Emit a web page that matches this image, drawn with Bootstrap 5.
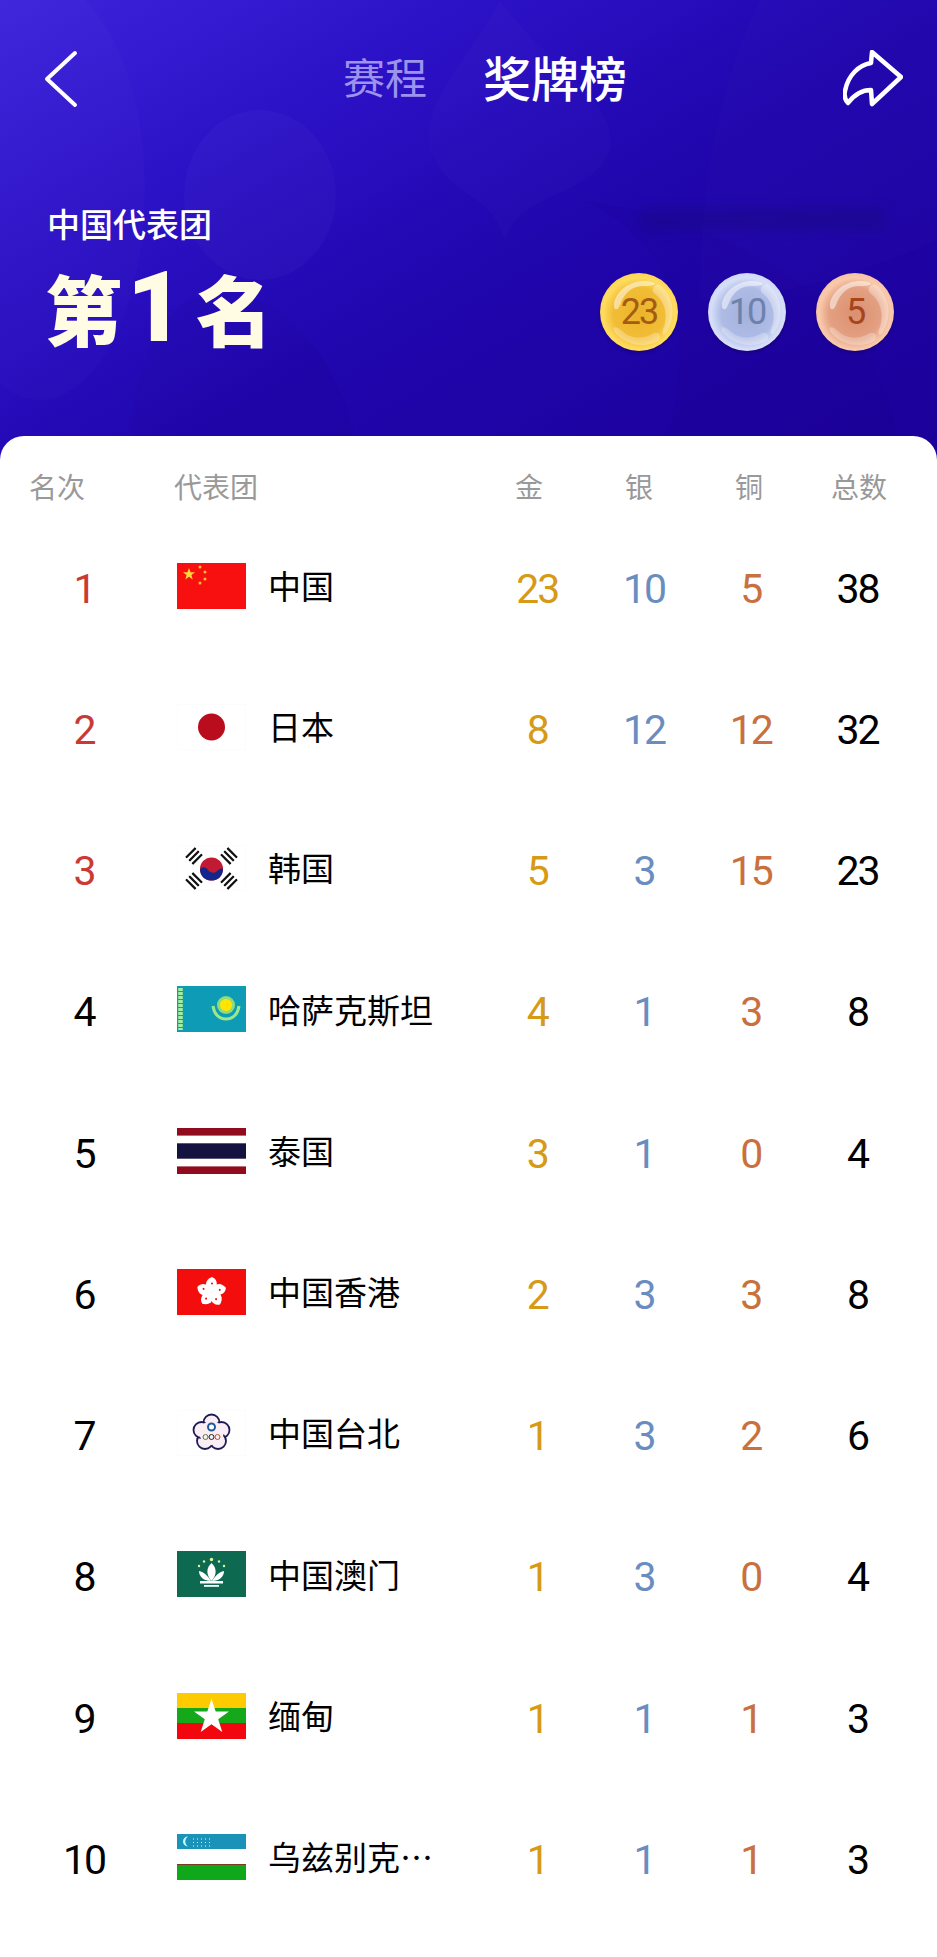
<!DOCTYPE html>
<html lang="zh-CN">
<head>
  <meta charset="UTF-8">
  <meta name="viewport" content="width=device-width, initial-scale=1">
  <title>奖牌榜</title>
  <link href="https://cdn.jsdelivr.net/npm/bootstrap@5.3.0/dist/css/bootstrap.min.css" rel="stylesheet">
  <style>
    body { font-family: "Noto Sans CJK SC", sans-serif; background: #fff; color: #000; }
    .hero { height: 460px; padding: 47px 43px 0 47px; color: #fff; overflow: hidden;
      background: linear-gradient(150deg, #3d24dc 0%, #2c12c6 28%, #2006ad 55%, #1c0099 100%); }
    .hero-bg { position: absolute; inset: 0; width: 100%; height: 100%; }
    .hero-inner { position: relative; }
    .back-icon { margin-left: -3px; margin-right: 265px; }
    .tab-off { font-size: 42px; line-height: 58px; color: #9d92ec; margin-right: 56px; padding-bottom: 6px; }
    .tab-on { font-size: 48px; line-height: 58px; font-weight: 500; padding-bottom: 6px; }
    .share-icon { margin-right: -9px; }
    .team-label { font-size: 33px; line-height: 40px; font-weight: 500; margin-top: 92px; }
    .place { font-size: 77px; line-height: 88px; height: 88px; font-weight: 900; color: #fffce3; margin: 21px 0 0 -2px; }
    .place-num { font-family: Roboto, sans-serif; font-size: 98px; margin: 0 12px 0 5px; }
    .haze { position: absolute; left: 640px; top: 208px; width: 245px; height: 22px; background: #150a78; opacity: .35; filter: blur(6px); }
    .coin-row { gap: 30px; margin-bottom: 1px; }
    .coin { width: 78px; height: 78px; font-family: Roboto, sans-serif; font-size: 36px; letter-spacing: -2px; line-height: 78px; text-align: center; position: relative; box-shadow: 0 2px 3px rgba(20,0,80,.45); }
    .coin svg { position: absolute; left: 0; top: 0; }
    .coin span { position: relative; }
    .coin-gold { background: radial-gradient(circle at 50% 52%, #ecb32c 0, #f2bd36 46%, #ffdc60 64%, #f5b72a 100%); color: #a35d12; }
    .coin-silver { background: radial-gradient(circle at 50% 52%, #a3b1dc 0, #aebbe5 46%, #d6def8 64%, #b4c1ee 100%); color: #6d82ab; }
    .coin-bronze { background: radial-gradient(circle at 50% 52%, #db9070 0, #e3a082 46%, #f9c9ac 64%, #e9a284 100%); color: #a6441a; }
    .sheet { position: relative; margin-top: -24px; background: #fff; border-radius: 24px 24px 0 0; padding-bottom: 30px; }
    .head-row { height: 79px; padding: 21px 23px 0 29px; font-size: 28px; line-height: 58px; color: #999; }
    .head-rank { width: 145px; }
    .head-num { width: 110px; text-align: center; }
    .rank-row { height: 141.25px; padding-right: 26px; }
    .rank-no { width: 168px; text-align: center; font-family: Roboto, sans-serif; font-size: 41px; letter-spacing: -2px; line-height: 46px; padding-top: 6px; }
    .rank-top { color: #c93a34; }
    .team-cell { margin-left: 9px; gap: 22px; font-size: 33px; white-space: nowrap; }
    .flag-img { width: 69px; height: 46px; display: block; flex: none; }
    .val { width: 106.75px; text-align: center; font-family: Roboto, sans-serif; font-size: 41px; letter-spacing: -2px; line-height: 46px; padding-top: 6px; }
    .v-gold { color: #d69a16; }
    .v-silver { color: #6a8dc0; }
    .v-bronze { color: #c9703f; }
    .v-total { color: #000; }
  </style>
</head>
<body>

<svg width="0" height="0" class="position-absolute">
  <symbol id="swirl" viewBox="0 0 78 78">
    <path d="M14 30C18 14 36 5 52 9C60 12 50 13 44 13C32 13 24 20 20 32C18 38 13 38 14 30Z" fill="#fff" opacity=".5"/>
    <path d="M60 12C74 24 77 44 66 60C62 64 62 58 64 54C68 42 65 28 54 20C50 16 56 9 60 12Z" fill="#fff" opacity=".32"/>
    <path d="M58 68C44 76 24 72 14 58C12 52 18 54 22 58C32 67 44 66 54 60C60 58 62 65 58 68Z" fill="#fff" opacity=".28"/>
  </symbol>
  <symbol id="hk-petal" viewBox="0 0 69 46">
    <path d="M34.500 23C27 19 27 11 35 8C42 11 41 19 34.500 23Z" fill="#fff"/>
    <circle cx="35" cy="14.500" r="1" fill="#e01010"/>
  </symbol>
  <symbol id="tri-bars" viewBox="0 0 14 12">
    <path d="M0 1.500H14M0 6H14M0 10.500H14" stroke="#111" stroke-width="2.300"/>
  </symbol>
</svg>

<header class="hero position-relative">
  <svg class="hero-bg" viewBox="0 0 937 460" preserveAspectRatio="none">
    <ellipse cx="40" cy="190" rx="105" ry="210" fill="#fff" opacity=".015"/>
    <ellipse cx="260" cy="195" rx="76" ry="85" fill="#fff" opacity=".025"/>
    <path d="M190 300C260 270 340 340 360 460H130C130 390 150 320 190 300Z" fill="#000" opacity=".025"/>
    <path d="M500 0C470 60 420 100 430 150C450 200 490 190 505 240C520 190 590 200 610 150C620 100 540 60 500 0Z" fill="#fff" opacity=".015"/>
    <path d="M760 0C720 80 700 180 700 300C760 300 850 280 937 240V0Z" fill="#fff" opacity=".012"/>
    <path d="M580 200C680 240 700 340 660 460H900C900 360 800 230 580 200Z" fill="#000" opacity=".02"/>
  </svg>
  <div class="haze"></div>

  <div class="hero-inner">
    <nav class="d-flex align-items-center">
      <svg class="back-icon" width="34" height="58" viewBox="0 0 34 58" fill="none" stroke="#fff" stroke-width="4" stroke-linecap="round" stroke-linejoin="round"><path d="M31 3L3 29L31 55"/></svg>
      <span class="tab-off">赛程</span>
      <span class="tab-on">奖牌榜</span>
      <svg class="ms-auto share-icon" width="60" height="58" viewBox="24 20 60 58" fill="none" stroke="#fff" stroke-width="4.500" stroke-linejoin="round" stroke-linecap="round"><path d="M53 22L82 47L53 74L52 60C42 60 35 65 29 73C26 70 25 66 26 61C29 45 40 35 52 33Z"/></svg>
    </nav>

    <div class="d-flex justify-content-between align-items-end">
      <div>
        <div class="team-label">中国代表团</div>
        <div class="place d-flex align-items-center">第<span class="place-num">1</span>名</div>
      </div>
      <div class="d-flex coin-row">
        <div class="coin coin-gold rounded-circle"><svg width="78" height="78"><use href="#swirl"/></svg><span>23</span></div>
        <div class="coin coin-silver rounded-circle"><svg width="78" height="78"><use href="#swirl"/></svg><span>10</span></div>
        <div class="coin coin-bronze rounded-circle"><svg width="78" height="78"><use href="#swirl"/></svg><span>5</span></div>
      </div>
    </div>
  </div>
</header>

<main class="sheet">
  <div class="head-row d-flex">
    <div class="head-rank">名次</div>
    <div class="flex-grow-1">代表团</div>
    <div class="head-num">金</div>
    <div class="head-num">银</div>
    <div class="head-num">铜</div>
    <div class="head-num">总数</div>
  </div>

  <div class="rank-row d-flex align-items-center">
    <div class="rank-no rank-top">1</div>
    <div class="team-cell d-flex align-items-center flex-grow-1">
      <svg class="flag-img" viewBox="0 0 69 46"><rect width="69" height="46" fill="#f80f0f"/><path d="M12 5l1.500 4.300h4.500l-3.600 2.700 1.300 4.400-3.700-2.600-3.700 2.600 1.300-4.400-3.600-2.700h4.500z" fill="#ffd83a"/><g fill="#f5c330"><circle cx="23" cy="4" r="1.500"/><circle cx="28" cy="9" r="1.500"/><circle cx="28" cy="16" r="1.500"/><circle cx="23" cy="20" r="1.500"/></g></svg>
      <span>中国</span>
    </div>
    <div class="val v-gold">23</div><div class="val v-silver">10</div><div class="val v-bronze">5</div><div class="val v-total">38</div>
  </div>

  <div class="rank-row d-flex align-items-center">
    <div class="rank-no rank-top">2</div>
    <div class="team-cell d-flex align-items-center flex-grow-1">
      <svg class="flag-img" viewBox="0 0 69 46"><rect x=".5" y=".5" width="68" height="45" fill="#fff" stroke="#fcfcfc"/><circle cx="34.500" cy="23" r="13.500" fill="#b90d1d"/></svg>
      <span>日本</span>
    </div>
    <div class="val v-gold">8</div><div class="val v-silver">12</div><div class="val v-bronze">12</div><div class="val v-total">32</div>
  </div>

  <div class="rank-row d-flex align-items-center">
    <div class="rank-no rank-top">3</div>
    <div class="team-cell d-flex align-items-center flex-grow-1">
      <svg class="flag-img" viewBox="0 0 69 46"><rect x=".5" y=".5" width="68" height="45" fill="#fff" stroke="#fcfcfc"/><circle cx="34.500" cy="24" r="11.500" fill="#c21a32"/><path d="M23 24.500C25 21 29 22 31 25C33 28 38 29 40 26C42 24 45 23 46 24C46 31 41 35.500 34.500 35.500C28 35.500 23 31 23 24.500Z" fill="#12268c"/><g transform="rotate(-45 17 11)"><use href="#tri-bars" x="10" y="5" width="14" height="12"/></g><g transform="rotate(45 52 11)"><use href="#tri-bars" x="45" y="5" width="14" height="12"/></g><g transform="rotate(45 17 36)"><use href="#tri-bars" x="10" y="30" width="14" height="12"/></g><g transform="rotate(-45 52 36)"><use href="#tri-bars" x="45" y="30" width="14" height="12"/></g></svg>
      <span>韩国</span>
    </div>
    <div class="val v-gold">5</div><div class="val v-silver">3</div><div class="val v-bronze">15</div><div class="val v-total">23</div>
  </div>

  <div class="rank-row d-flex align-items-center">
    <div class="rank-no">4</div>
    <div class="team-cell d-flex align-items-center flex-grow-1">
      <svg class="flag-img" viewBox="0 0 69 46"><rect width="69" height="46" fill="#0e9bb5"/><path d="M3.500 2V44" stroke="#a5ee9c" stroke-width="4.500" stroke-dasharray="3 1"/><circle cx="49" cy="19" r="9" fill="#8fdc7c"/><circle cx="49" cy="19" r="6" fill="#ffe500"/><path d="M36 20C37 28 42 33 49 33C56 33 61 28 62 20" fill="none" stroke="#9be88a" stroke-width="3"/></svg>
      <span>哈萨克斯坦</span>
    </div>
    <div class="val v-gold">4</div><div class="val v-silver">1</div><div class="val v-bronze">3</div><div class="val v-total">8</div>
  </div>

  <div class="rank-row d-flex align-items-center">
    <div class="rank-no">5</div>
    <div class="team-cell d-flex align-items-center flex-grow-1">
      <svg class="flag-img" viewBox="0 0 69 46"><rect width="69" height="46" fill="#900b1e"/><rect y="7.600" width="69" height="30.800" fill="#fff"/><rect y="15.300" width="69" height="15.400" fill="#14123f"/></svg>
      <span>泰国</span>
    </div>
    <div class="val v-gold">3</div><div class="val v-silver">1</div><div class="val v-bronze">0</div><div class="val v-total">4</div>
  </div>

  <div class="rank-row d-flex align-items-center">
    <div class="rank-no">6</div>
    <div class="team-cell d-flex align-items-center flex-grow-1">
      <svg class="flag-img" viewBox="0 0 69 46"><rect width="69" height="46" fill="#f30d0d"/><use href="#hk-petal" width="69" height="46"/><use href="#hk-petal" width="69" height="46" transform="rotate(72 34.500 23)"/><use href="#hk-petal" width="69" height="46" transform="rotate(144 34.500 23)"/><use href="#hk-petal" width="69" height="46" transform="rotate(216 34.500 23)"/><use href="#hk-petal" width="69" height="46" transform="rotate(288 34.500 23)"/></svg>
      <span>中国香港</span>
    </div>
    <div class="val v-gold">2</div><div class="val v-silver">3</div><div class="val v-bronze">3</div><div class="val v-total">8</div>
  </div>

  <div class="rank-row d-flex align-items-center">
    <div class="rank-no">7</div>
    <div class="team-cell d-flex align-items-center flex-grow-1">
      <svg class="flag-img" viewBox="0 0 69 46"><rect x=".5" y=".5" width="68" height="45" fill="#fff" stroke="#fcfcfc"/><g fill="#faeef5" stroke="#1a1a55" stroke-width="1.800"><circle cx="34.500" cy="12.500" r="8"/><circle cx="44.500" cy="20" r="8"/><circle cx="41" cy="31" r="8"/><circle cx="28" cy="31" r="8"/><circle cx="24.500" cy="20" r="8"/></g><circle cx="34.500" cy="23" r="12" fill="#faeef5"/><circle cx="34.500" cy="17" r="3.500" fill="#fff" stroke="#1d5a9a" stroke-width="2"/><g fill="none" stroke-width="1"><circle cx="28.500" cy="27" r="2.500" stroke="#5a7a3a"/><circle cx="34.500" cy="27" r="2.500" stroke="#222"/><circle cx="40.500" cy="27" r="2.500" stroke="#b05030"/></g></svg>
      <span>中国台北</span>
    </div>
    <div class="val v-gold">1</div><div class="val v-silver">3</div><div class="val v-bronze">2</div><div class="val v-total">6</div>
  </div>

  <div class="rank-row d-flex align-items-center">
    <div class="rank-no">8</div>
    <div class="team-cell d-flex align-items-center flex-grow-1">
      <svg class="flag-img" viewBox="0 0 69 46"><rect width="69" height="46" fill="#0d6a50"/><g fill="#fff"><path d="M34.500 12C29 17 29 24 34.500 30C40 24 40 17 34.500 12Z"/><path d="M22 20C22 26 27 30 34 30C31 25 27 21 22 20Z"/><path d="M47 20C47 26 42 30 35 30C38 25 42 21 47 20Z"/><rect x="23" y="30" width="23" height="2.500"/><rect x="27" y="34" width="15" height="1.800"/></g><g fill="#dff5a0"><circle cx="34.500" cy="8.500" r="1.700"/><circle cx="27" cy="10.500" r="1.200"/><circle cx="42" cy="10.500" r="1.200"/><circle cx="22" cy="15" r="1.200"/><circle cx="47" cy="15" r="1.200"/></g></svg>
      <span>中国澳门</span>
    </div>
    <div class="val v-gold">1</div><div class="val v-silver">3</div><div class="val v-bronze">0</div><div class="val v-total">4</div>
  </div>

  <div class="rank-row d-flex align-items-center">
    <div class="rank-no">9</div>
    <div class="team-cell d-flex align-items-center flex-grow-1">
      <svg class="flag-img" viewBox="0 0 69 46"><rect width="69" height="16" fill="#fdcb00"/><rect y="15" width="69" height="16" fill="#14a81a"/><rect y="30" width="69" height="16" fill="#f2070f"/><path d="M34.500 6L38.700 18.500H52L41.200 26.300L45.300 39L34.500 31.200L23.700 39L27.800 26.300L17 18.500H30.300Z" fill="#fff"/></svg>
      <span>缅甸</span>
    </div>
    <div class="val v-gold">1</div><div class="val v-silver">1</div><div class="val v-bronze">1</div><div class="val v-total">3</div>
  </div>

  <div class="rank-row d-flex align-items-center">
    <div class="rank-no">10</div>
    <div class="team-cell d-flex align-items-center flex-grow-1">
      <svg class="flag-img" viewBox="0 0 69 46"><rect width="69" height="15" fill="#1b92b7"/><rect y="30" width="69" height="1.500" fill="#7a3a20"/><rect y="31" width="69" height="15" fill="#0fa81b"/><path d="M11 2.500A5 5 0 1 0 11 12.500A6 6 0 0 1 11 2.500Z" fill="#bff"/><path d="M16 5H35M16 8.500H35M16 12H35" stroke="#dff" stroke-width="1" stroke-dasharray="1 3"/></svg>
      <span>乌兹别克…</span>
    </div>
    <div class="val v-gold">1</div><div class="val v-silver">1</div><div class="val v-bronze">1</div><div class="val v-total">3</div>
  </div>
</main>

<script src="https://cdn.jsdelivr.net/npm/bootstrap@5.3.0/dist/js/bootstrap.bundle.min.js"></script>
</body>
</html>
